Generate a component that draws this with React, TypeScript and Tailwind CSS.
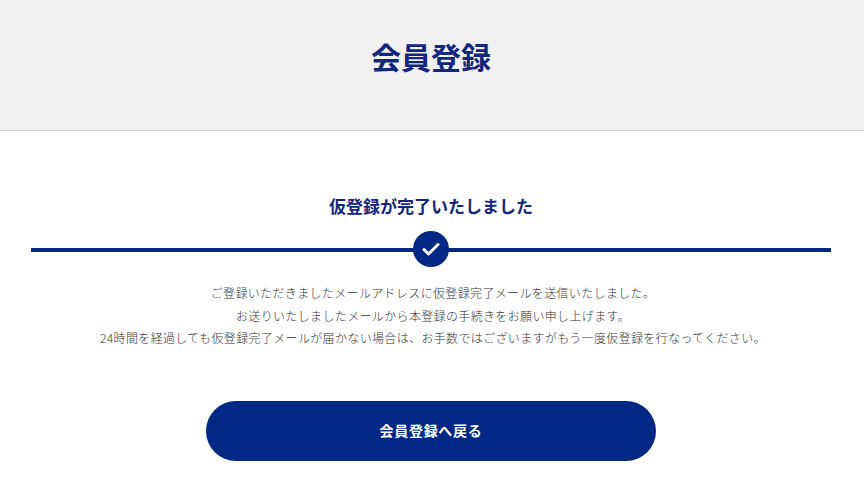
export default function App() {
  const jp = { fontFamily: '"Noto Sans CJK JP", sans-serif' };
  return (
    <div className="w-full h-[491px] overflow-hidden bg-white" style={jp}>
      <div className="h-[131px] bg-[#f1f1f1] border-b border-[#cccccc] flex items-center justify-center pr-[2px] pb-[18px]">
        <h1 className="text-[30px] font-bold text-[#14277b] leading-none">会員登録</h1>
      </div>
      <div className="pl-[31px] pr-[33px] pt-[63px] flex flex-col items-center">
        <h2 className="text-[17px] font-bold text-[#14277b] leading-[24px]">仮登録が完了いたしました</h2>
        <div className="relative w-full h-[36px] mt-[13px] flex items-center justify-center">
          <div className="absolute left-0 right-0 top-[17px] h-[4px] bg-[#002884]" />
          <div className="relative w-[36px] h-[36px] rounded-full bg-[#002884] flex items-center justify-center">
            <svg width="18" height="14" viewBox="0 0 18 14" fill="none">
              <path d="M2 7.5 L6.5 12 L16 2.5" stroke="white" strokeWidth="3" strokeLinecap="round" strokeLinejoin="round" />
            </svg>
          </div>
        </div>
        <div className="mt-[15px] pl-[4px] text-[12px] leading-[22.5px] tracking-[0.35px] font-light text-[#333333] text-center">
          <p>ご登録いただきましたメールアドレスに仮登録完了メールを送信いたしました。</p>
          <p>お送りいたしましたメールから本登録の手続きをお願い申し上げます。</p>
          <p>24時間を経過しても仮登録完了メールが届かない場合は、お手数ではございますがもう一度仮登録を行なってください。</p>
        </div>
        <button className="mt-[51px] w-[450px] h-[60px] rounded-[30px] bg-[#002884] text-white text-[14px] tracking-[0.7px] font-bold">会員登録へ戻る</button>
      </div>
    </div>
  );
}
